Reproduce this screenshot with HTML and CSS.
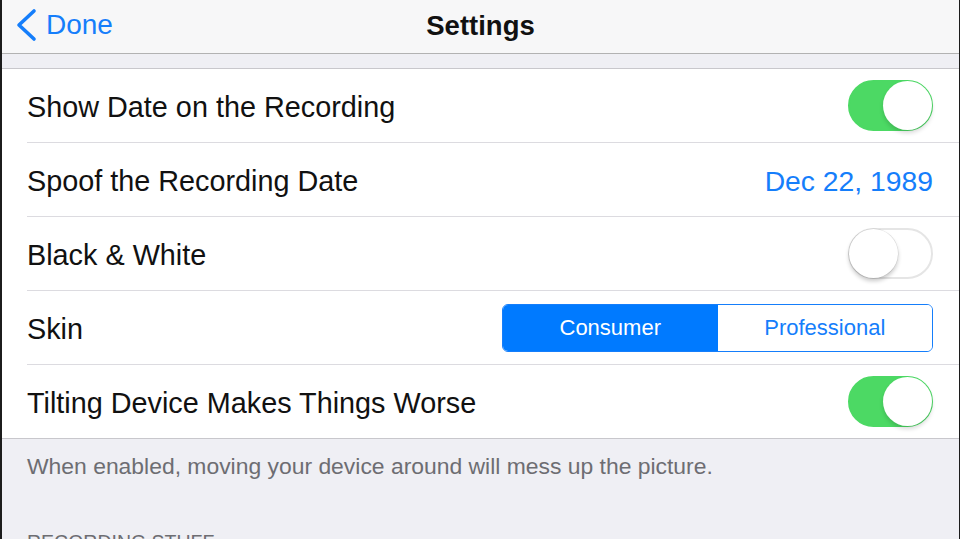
FILE: index.html
```html
<!DOCTYPE html>
<html>
<head>
<meta charset="utf-8">
<link rel="stylesheet" href="styles.css">
</head>
<body>
<div class="screen">
  <header class="nav">
    <a class="back">
      <svg class="chev" width="24" height="34" viewBox="0 0 24 34"><polyline points="20,3 5,17 20,31" fill="none" stroke="#157efb" stroke-width="3.6" stroke-linecap="round" stroke-linejoin="round"/></svg>
      <span>Done</span>
    </a>
    <h1 class="title">Settings</h1>
  </header>
  <div class="gap"></div>
  <section class="group">
    <div class="row"><div class="inner"><span class="label">Show Date on the Recording</span><span class="toggle on"><span class="knob"></span></span></div></div>
    <div class="row"><div class="inner"><span class="label">Spoof the Recording Date</span><span class="value">Dec 22, 1989</span></div></div>
    <div class="row"><div class="inner"><span class="label">Black &amp; White</span><span class="toggle"><span class="knob"></span></span></div></div>
    <div class="row"><div class="inner"><span class="label">Skin</span>
      <div class="seg"><span class="segitem active">Consumer</span><span class="segitem">Professional</span></div></div></div>
    <div class="row"><div class="inner last"><span class="label">Tilting Device Makes Things Worse</span><span class="toggle on"><span class="knob"></span></span></div></div>
  </section>
  <p class="footer">When enabled, moving your device around will mess up the picture.</p>
  <p class="header">RECORDING STUFF</p>
</div>
</body>
</html>
```
FILE: styles.css
```css
html, body {
  margin: 0;
  padding: 0;
  background: #efeff4;
  overflow: hidden;
}
body {
  font-family: "Liberation Sans", Arial, sans-serif;
}
.screen {
  width: 960px;
  height: 539px;
  box-sizing: border-box;
  border-left: 2px solid #1c1c1c;
  border-right: 1px solid #1c1c1c;
  background: #efeff4;
  overflow: hidden;
}
.nav {
  height: 53px;
  background: #f7f7f8;
  border-bottom: 1px solid #b2b2b2;
  display: flex;
  align-items: center;
  justify-content: center;
  position: relative;
}
.back {
  position: absolute;
  left: 12px;
  top: 8px;
  display: flex;
  align-items: center;
  gap: 8px;
  color: #157efb;
  font-size: 28px;
}
.back span {
  line-height: 34px;
}
.title {
  margin: 0;
  font-size: 27.5px;
  font-weight: bold;
  color: #111;
  padding-bottom: 2px;
}
.gap {
  height: 14px;
}
.group {
  background: #fff;
  border-top: 1px solid #c8c7cc;
  border-bottom: 1px solid #c8c7cc;
}
.row {
  padding-left: 25px;
}
.inner {
  height: 73px;
  border-bottom: 1px solid #dcdbe0;
  display: flex;
  align-items: center;
  justify-content: space-between;
  padding-right: 26px;
}
.inner.last {
  border-bottom: none;
}
.label {
  font-size: 28.8px;
  color: #111;
  padding-top: 4px;
}
.value {
  font-size: 28.3px;
  color: #157efb;
  padding-top: 3px;
}
.toggle {
  width: 85px;
  height: 51px;
  box-sizing: border-box;
  border-radius: 26px;
  border: 2px solid #e5e5e5;
  background: #fff;
  position: relative;
}
.toggle.on {
  background: #4cd964;
  border-color: #4cd964;
}
.knob {
  position: absolute;
  top: -1px;
  left: -1px;
  width: 49px;
  height: 49px;
  box-sizing: border-box;
  border-radius: 50%;
  background: #fff;
  box-shadow: 0 3px 4px rgba(0,0,0,0.22), 0 0 0 0.5px rgba(0,0,0,0.12);
}
.toggle.on .knob {
  left: auto;
  right: -1px;
  box-shadow: 0 3px 4px rgba(0,0,0,0.15);
}
.seg {
  display: flex;
  width: 431px;
  height: 48px;
  box-sizing: border-box;
  border: 1.5px solid #157efb;
  border-radius: 6px;
  overflow: hidden;
}
.segitem {
  flex: 1;
  display: flex;
  align-items: center;
  justify-content: center;
  font-size: 22px;
  color: #157efb;
  background: #fff;
}
.segitem.active {
  background: #007aff;
  color: #fff;
}
.footer {
  margin: 14px 0 0 25px;
  font-size: 22.9px;
  color: #6d6d72;
  line-height: 26px;
}
.header {
  margin: 52px 0 0 25px;
  font-size: 19.5px;
  color: #6d6d72;
  line-height: 22px;
}
```
